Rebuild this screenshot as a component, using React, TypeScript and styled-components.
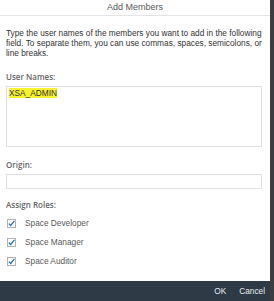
import styled, { createGlobalStyle } from "styled-components";

const Global = createGlobalStyle`
	*, *::before, *::after { box-sizing: border-box; }
	html, body { margin: 0; padding: 0; background: #3b3d40; }
	body { font-family: "Liberation Sans", Arial, sans-serif; }
`;

const roles = ["Space Developer", "Space Manager", "Space Auditor"];

function CheckIcon() {
	return (
		<svg width="9" height="9" viewBox="0 0 9 9">
			<rect x="0.5" y="0.5" width="8" height="8" fill="#fff" stroke="#b0b4b8" />
			<path d="M1.8 4.6 L3.7 6.5 L7.4 1.8" fill="none" stroke="#2a6fb5" strokeWidth="1.3" />
		</svg>
	);
}

function App() {
	return (
		<>
			<Global />
			<Page>
				<Dialog>
					<Header>Add Members</Header>
					<Body>
						<Hint>
							Type the user names of the members you want to add in the following field. To separate them,
							you can use commas, spaces, semicolons, or line breaks.
						</Hint>
						<Label>User Names:</Label>
						<TextArea>
							<Marked>XSA_ADMIN</Marked>
						</TextArea>
						<Label>Origin:</Label>
						<Input />
						<Label>Assign Roles:</Label>
						<Roles>
							{roles.map((r) => (
								<Role key={r}>
									<CheckIcon />
									<span>{r}</span>
								</Role>
							))}
						</Roles>
					</Body>
					<Footer>
						<FooterButton>OK</FooterButton>
						<FooterButton>Cancel</FooterButton>
					</Footer>
				</Dialog>
			</Page>
		</>
	);
}

export default App;

const Page = styled("div")({
	width: "274px",
	height: "301px",
	display: "flex",
	background: "#3b3d40",
});

const Dialog = styled("div")({
	width: "270px",
	height: "301px",
	background: "#fff",
	display: "flex",
	flexDirection: "column",
});

const Header = styled("div")({
	height: "16px",
	lineHeight: "15px",
	textAlign: "center",
	fontSize: "9px",
	color: "#5a5a5a",
	borderBottom: "1px solid #e5e5e5",
});

const Body = styled("div")({
	flex: 1,
	padding: "12px 8px 0 6px",
	display: "flex",
	flexDirection: "column",
});

const Hint = styled("div")({
	fontSize: "8.3px",
	lineHeight: "10px",
	color: "#333",
	marginBottom: "14px",
});

const Label = styled("div")({
	fontFamily: "\"Open Sans\", \"Liberation Sans\", sans-serif",
	fontWeight: 600,
	fontSize: "8px",
	color: "#666",
	lineHeight: "10px",
	marginBottom: "4px",
});

const TextArea = styled("div")({
	height: "61px",
	border: "1px solid #e0e0e0",
	padding: "1px 2px",
	marginBottom: "13px",
	fontSize: "8.3px",
	lineHeight: "10px",
});

const Marked = styled("span")({
	background: "#f7f230",
	color: "#333",
});

const Input = styled("div")({
	height: "15px",
	border: "1px solid #e0e0e0",
	marginBottom: "11px",
});

const Roles = styled("div")({
	display: "flex",
	flexDirection: "column",
	gap: "9px",
	paddingTop: "4px",
});

const Role = styled("div")({
	display: "flex",
	alignItems: "center",
	gap: "9px",
	fontSize: "8.3px",
	color: "#5a5a5a",
	height: "10px",
	paddingLeft: "1px",
});

const Footer = styled("div")({
	height: "20px",
	background: "#2f3a47",
	display: "flex",
	justifyContent: "flex-end",
	alignItems: "center",
	gap: "13px",
	paddingRight: "5px",
});

const FooterButton = styled("span")({
	color: "#e8ecef",
	fontSize: "8.3px",
});
